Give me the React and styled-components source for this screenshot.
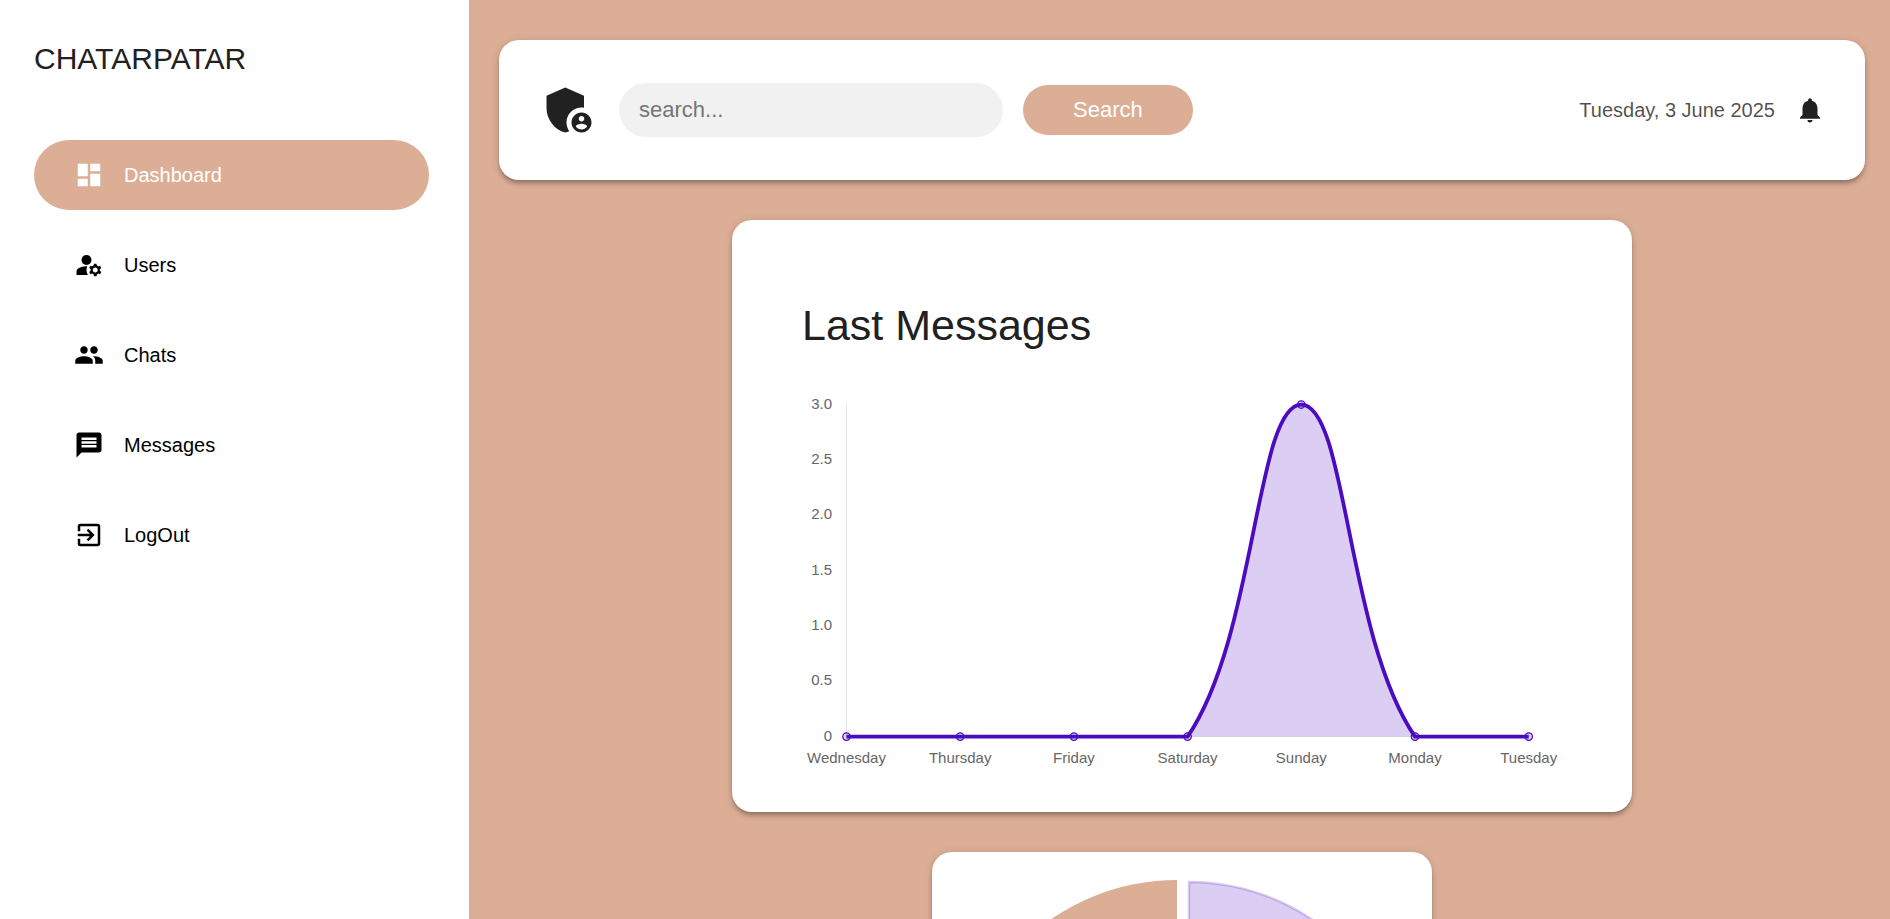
import React from "react";
import styled, { createGlobalStyle, css } from "styled-components";
import {
  MdAdminPanelSettings,
  MdDashboard,
  MdExitToApp,
  MdNotifications,
} from "react-icons/md";

const accent = "#dcae96";
const purple = "rgb(75, 12, 192)";
const purpleLight = "rgba(75, 12, 192, 0.2)";

const GlobalStyle = createGlobalStyle`
  * { box-sizing: border-box; margin: 0; padding: 0; }
  html, body, #root { height: 100%; }
  body {
    background: ${accent};
    color: #212121;
    font-family: "Liberation Sans", Arial, sans-serif;
    font-size: 20px;
    line-height: 30px;
  }
  button, input { font: inherit; border: none; }
`;

const Layout = styled.div`
  display: grid;
  grid-template-columns: 469px minmax(0, 1fr);
  height: 100vh;
  overflow: hidden;
`;

const Sidebar = styled.aside`
  background: #fff;
  padding: 40px 40px 40px 34px;
`;

const Brand = styled.h1`
  font-size: 30px;
  font-weight: 400;
  line-height: 38px;
  margin-bottom: 62px;
`;

const Nav = styled.nav`
  display: flex;
  flex-direction: column;
  gap: 20px;
`;

const NavLink = styled.a`
  display: flex;
  align-items: center;
  gap: 20px;
  padding: 20px 40px;
  border-radius: 40px;
  color: #000;
  text-decoration: none;
  ${({ $active }) =>
    $active &&
    css`
      background: ${accent};
      color: #fff;
    `}
`;

const Main = styled.main`
  display: flex;
  flex-direction: column;
  align-items: center;
  gap: 40px;
  padding: 40px 25px 40px 30px;
  overflow: hidden;
`;

const Card = styled.section`
  flex: none;
  width: 100%;
  border-radius: 20px;
  background: #fff;
  box-shadow:
    0 4px 4px -2px rgba(0, 0, 0, 0.2),
    0 4px 5px rgba(0, 0, 0, 0.14),
    0 1px 10px rgba(0, 0, 0, 0.12);
`;

const HeaderCard = styled(Card)`
  display: flex;
  align-items: center;
  gap: 20px;
  padding: 40px;
`;

const SearchForm = styled.form`
  display: flex;
  align-items: center;
  gap: 20px;
  margin-right: auto;
`;

const SearchInput = styled.input`
  width: 384px;
  height: 54px;
  padding: 0 20px;
  border-radius: 30px;
  background: #f1f1f1;
  font-size: 22px;
  &::placeholder {
    color: #757575;
  }
`;

const SearchButton = styled.button`
  height: 50px;
  padding: 0 50px;
  border-radius: 30px;
  background: ${accent};
  color: #fff;
  font-size: 22px;
  cursor: pointer;
`;

const Today = styled.time`
  color: rgba(0, 0, 0, 0.7);
  white-space: nowrap;
`;

const ChartCard = styled(Card)`
  max-width: 900px;
  padding: 40px 70px;
`;

const ChartTitle = styled.h2`
  margin: 40px 0 42px;
  font-size: 43px;
  font-weight: 400;
  line-height: 50px;
`;

const Plot = styled.svg`
  display: block;
  width: 100%;
  height: auto;
  overflow: visible;
`;

const TickLabel = styled.text`
  fill: #666;
  font-size: 15px;
`;

const PieCard = styled(Card)`
  max-width: 500px;
  padding: 25px;
`;

function FilledIcon({ size, children, ...rest }) {
  return (
    <svg width={size} height={size} viewBox="0 0 24 24" fill="currentColor" {...rest}>
      {children}
    </svg>
  );
}

const UsersIcon = (props) => (
  <FilledIcon {...props}>
    <circle cx="10" cy="8" r="4" />
    <path d="M10.67 13.02c-.22-.01-.44-.02-.67-.02-2.42 0-4.68.67-6.61 1.82-.88.52-1.39 1.5-1.39 2.53V20h9.26c-.79-1.13-1.26-2.51-1.26-4 0-1.07.25-2.07.67-2.98zM20.75 16c0-.22-.03-.42-.06-.63l1.14-1.01-1-1.73-1.45.49c-.32-.27-.68-.48-1.08-.63L18 11h-2l-.3 1.49c-.4.15-.76.36-1.08.63l-1.45-.49-1 1.73 1.14 1.01c-.03.21-.06.41-.06.63s.03.42.06.63l-1.14 1.01 1 1.73 1.45-.49c.32.27.68.48 1.08.63L16 21h2l.3-1.49c.4-.15.76-.36 1.08-.63l1.45.49 1-1.73-1.14-1.01c.03-.21.06-.41.06-.63zM17 18c-1.1 0-2-.9-2-2s.9-2 2-2 2 .9 2 2-.9 2-2 2z" />
  </FilledIcon>
);

const ChatsIcon = (props) => (
  <FilledIcon {...props}>
    <path d="M16 11c1.66 0 2.99-1.34 2.99-3S17.66 5 16 5c-1.66 0-3 1.34-3 3s1.34 3 3 3zm-8 0c1.66 0 2.99-1.34 2.99-3S9.66 5 8 5C6.34 5 5 6.34 5 8s1.34 3 3 3zm0 2c-2.33 0-7 1.17-7 3.5V19h14v-2.5c0-2.33-4.67-3.5-7-3.5zm8 0c-.29 0-.62.02-.97.05 1.16.84 1.97 1.97 1.97 3.45V19h6v-2.5c0-2.33-4.67-3.5-7-3.5z" />
  </FilledIcon>
);

const MessagesIcon = (props) => (
  <FilledIcon {...props}>
    <path d="M20 2H4c-1.1 0-1.99.9-1.99 2L2 22l4-4h14c1.1 0 2-.9 2-2V4c0-1.1-.9-2-2-2zm-2 12H6v-2h12v2zm0-3H6V9h12v2zm0-3H6V6h12v2z" />
  </FilledIcon>
);

const links = [
  { label: "Dashboard", Icon: MdDashboard, active: true },
  { label: "Users", Icon: UsersIcon },
  { label: "Chats", Icon: ChatsIcon },
  { label: "Messages", Icon: MessagesIcon },
  { label: "LogOut", Icon: MdExitToApp },
];

const series = [
  { day: "Wednesday", value: 0 },
  { day: "Thursday", value: 0 },
  { day: "Friday", value: 0 },
  { day: "Saturday", value: 0 },
  { day: "Sunday", value: 3 },
  { day: "Monday", value: 0 },
  { day: "Tuesday", value: 0 },
];

const ticks = ["0", "0.5", "1.0", "1.5", "2.0", "2.5", "3.0"];

const left = 44.5;
const top = 12.5;
const bottom = 344.6;
const step = 113.7;
const tension = 0.4;

const points = series.map(({ value }, i) => ({
  x: left + i * step,
  y: bottom - (value / 3) * (bottom - top),
}));

const clampY = (y) => Math.min(bottom, Math.max(top, y));

// Cubic spline whose control points are kept inside the plot area.
function splinePath(pts) {
  const controls = pts.map((p, i) => {
    const a = pts[i - 1] || p;
    const b = pts[i + 1] || p;
    const before = Math.hypot(p.x - a.x, p.y - a.y);
    const after = Math.hypot(b.x - p.x, b.y - p.y);
    const fa = (tension * before) / (before + after);
    const fb = (tension * after) / (before + after);
    return {
      inX: p.x - fa * (b.x - a.x),
      inY: clampY(p.y - fa * (b.y - a.y)),
      outX: p.x + fb * (b.x - a.x),
      outY: clampY(p.y + fb * (b.y - a.y)),
    };
  });
  return pts.reduce((d, p, i) => {
    if (i === 0) return `M${p.x} ${p.y}`;
    const from = controls[i - 1];
    const to = controls[i];
    return `${d} C${from.outX} ${from.outY} ${to.inX} ${to.inY} ${p.x} ${p.y}`;
  }, "");
}

const linePath = splinePath(points);

function LineChart() {
  return (
    <Plot viewBox="0 0 760 380" role="img" aria-label="Messages per day">
      <path d={`M${left} ${top}V344.5H${points[6].x}`} fill="none" stroke="rgba(0,0,0,0.1)" />
      <path d={`${linePath}Z`} fill={purpleLight} />
      <path d={linePath} fill="none" stroke={purple} strokeWidth="3.75" />
      {points.map((p, i) => (
        <circle key={series[i].day} cx={p.x} cy={p.y} r="3.75" fill={purpleLight} stroke={purple} strokeWidth="1.25" />
      ))}
      {ticks.map((label, i) => (
        <TickLabel key={label} x="30" y={349 - Math.ceil((i * 332) / 6)} textAnchor="end">
          {label}
        </TickLabel>
      ))}
      {series.map(({ day }, i) => (
        <TickLabel key={day} x={points[i].x} y="371" textAnchor="middle">
          {day}
        </TickLabel>
      ))}
    </Plot>
  );
}

function PieChart() {
  return (
    <Plot viewBox="0 0 450 450" role="img" aria-label="Chat types">
      <path d="M220 3 A222 222 0 0 0 220 447 Z" fill={accent} />
      <path
        d="M232 5 A220 220 0 0 1 232 445 Z"
        fill={purpleLight}
        stroke={purpleLight}
        strokeWidth="2.5"
      />
    </Plot>
  );
}

export default function App() {
  return (
    <>
      <GlobalStyle />
      <Layout>
        <Sidebar>
          <Brand>CHATARPATAR</Brand>
          <Nav aria-label="Admin">
            {links.map(({ label, Icon, active }) => (
              <NavLink key={label} href="#" $active={active} aria-current={active ? "page" : undefined}>
                <Icon size={30} aria-hidden="true" />
                {label}
              </NavLink>
            ))}
          </Nav>
        </Sidebar>
        <Main>
          <HeaderCard as="header">
            <MdAdminPanelSettings size={60} aria-hidden="true" />
            <SearchForm role="search" onSubmit={(e) => e.preventDefault()}>
              <SearchInput type="text" placeholder="search..." aria-label="Search" />
              <SearchButton type="submit">Search</SearchButton>
            </SearchForm>
            <Today dateTime="2025-06-03">Tuesday, 3 June 2025</Today>
            <MdNotifications size={30} aria-hidden="true" />
          </HeaderCard>
          <ChartCard>
            <ChartTitle>Last Messages</ChartTitle>
            <LineChart />
          </ChartCard>
          <PieCard>
            <PieChart />
          </PieCard>
        </Main>
      </Layout>
    </>
  );
}
